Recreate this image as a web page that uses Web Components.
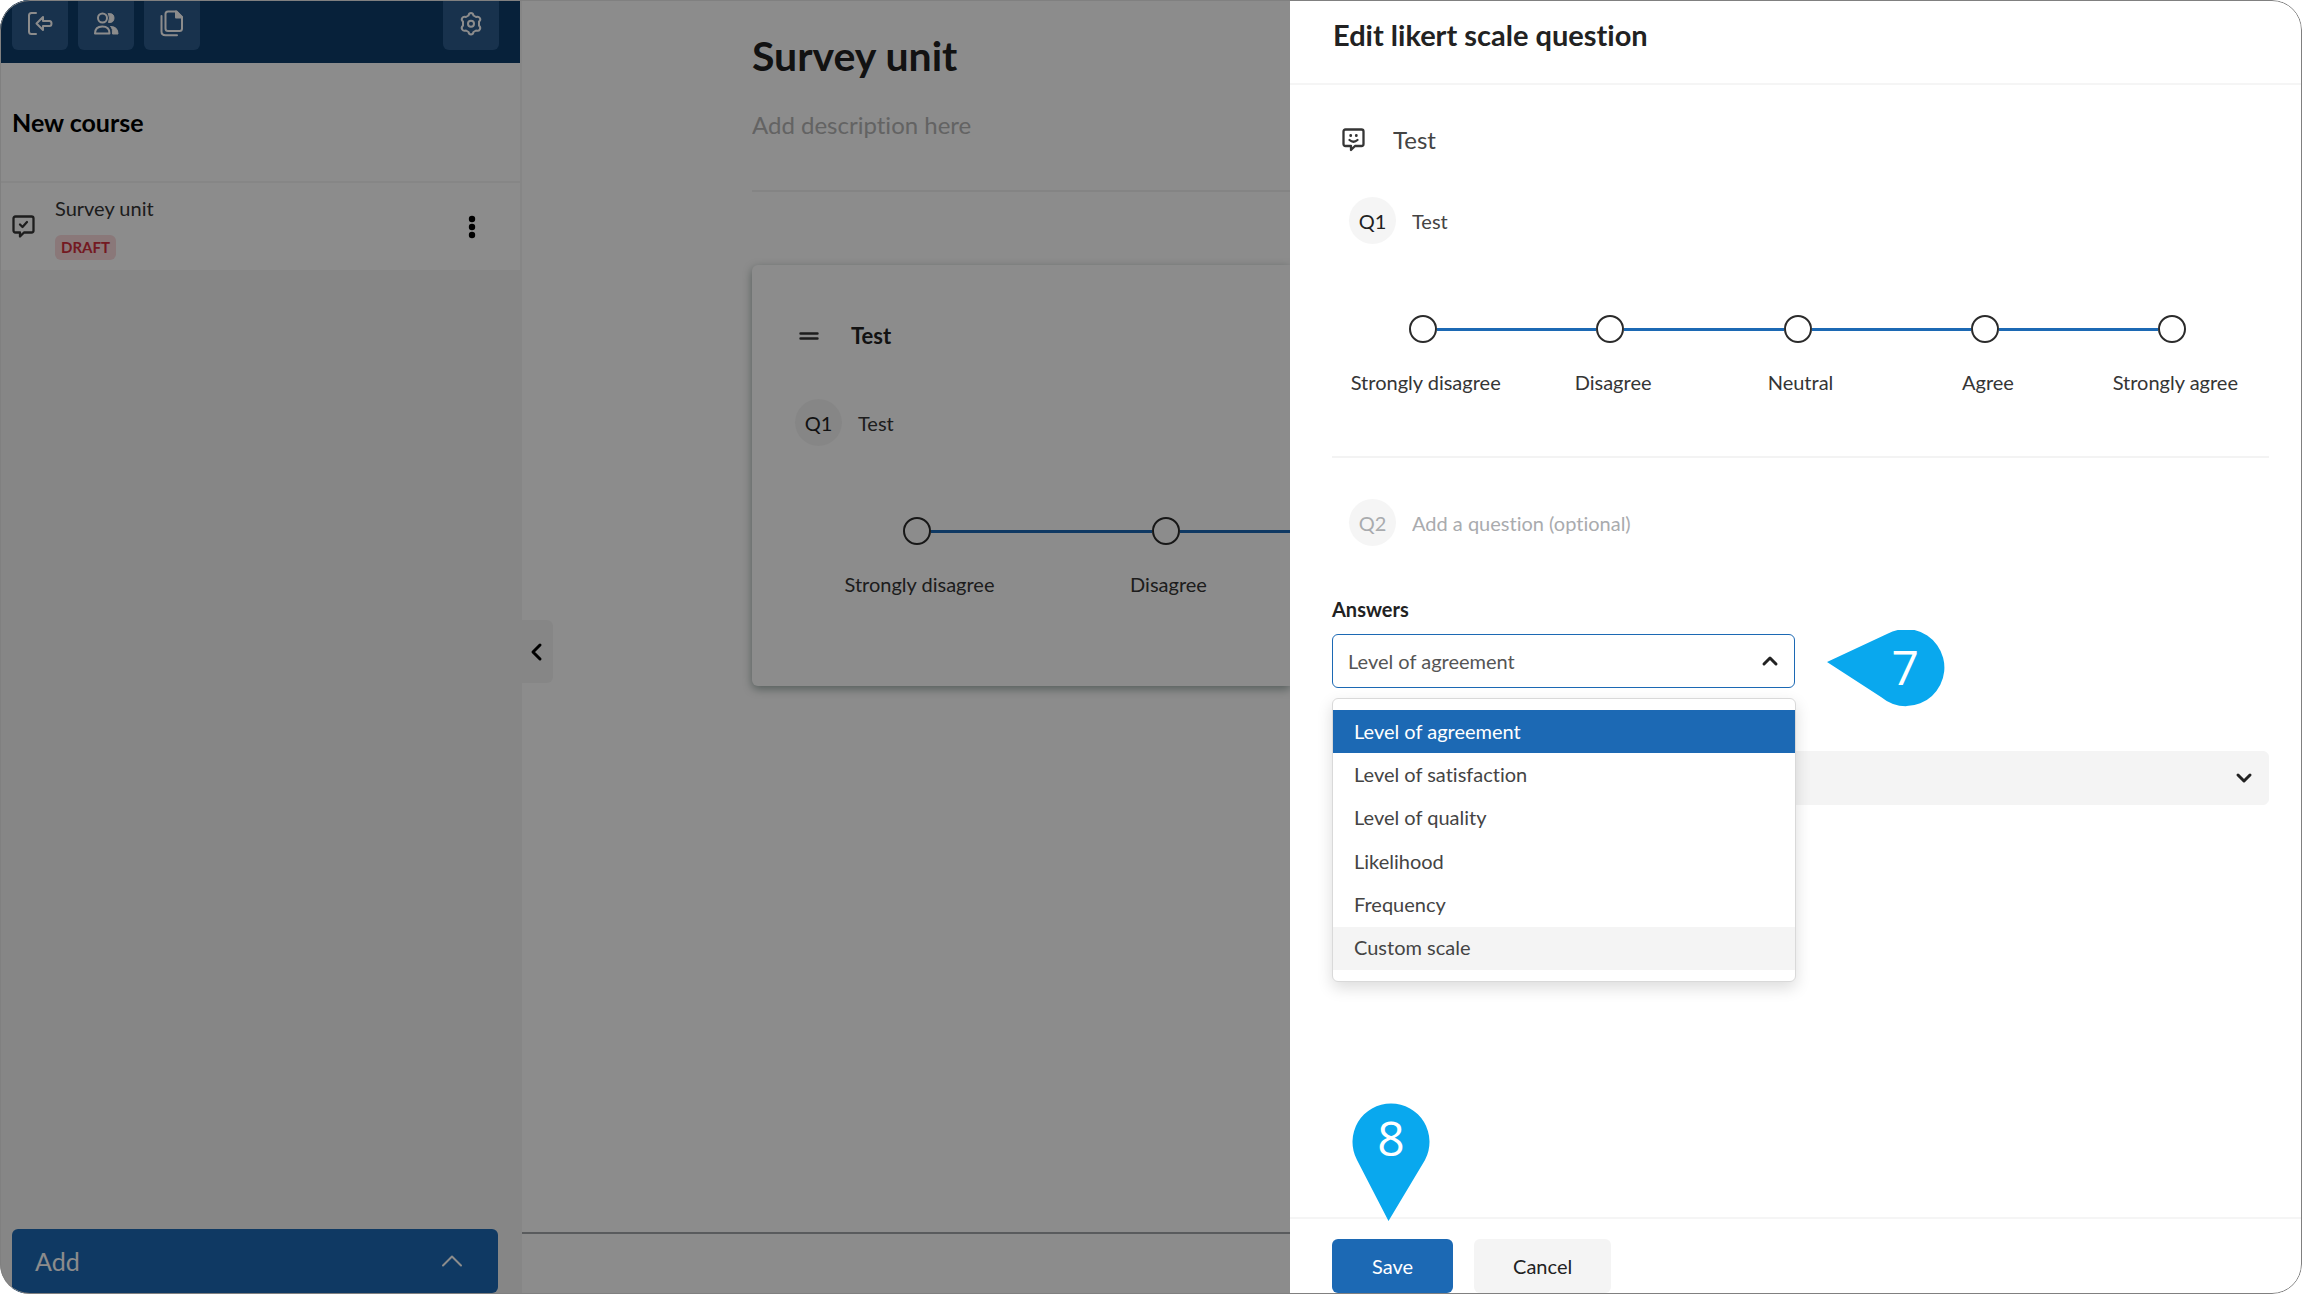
<!DOCTYPE html>
<html lang="en">
<head>
<meta charset="utf-8">
<title>Survey unit</title>
<style>
html, body { height: 100%; margin: 0; background: #fff; }
body { font: 400 20px/28px Lato, "Open Sans", sans-serif; font-variant-ligatures: none; color: #353535; }
</style>
</head>
<body>
<survey-app></survey-app>

<template id="t-icon">
<style>
:host { display: block; flex: none; width: var(--w, 26px); height: var(--h, 26px); }
svg { display: block; width: 100%; height: 100%; fill: none; stroke: currentColor; stroke-width: 2; stroke-linecap: round; stroke-linejoin: round; }
</style>
</template>

<template id="t-tool">
<style>
:host { display: block; }
button { display: flex; align-items: center; justify-content: center; width: 56px; height: 56px; padding: 3px 0 0; border: 0; border-radius: 6px; background: #2c5b8c; color: #fff; }
</style>
<button type="button"><slot></slot></button>
</template>

<template id="t-badge">
<style>
:host { display: flex; flex: none; align-items: center; justify-content: center; width: 47px; height: 47px; border-radius: 50%; background: #f5f5f5; color: #222; }
</style>
<slot></slot>
</template>

<template id="t-likert">
<style>
:host { display: flex; }
.step { flex: 1; min-width: 0; display: flex; flex-direction: column; align-items: center; gap: 25px; }
.rail { display: flex; align-items: center; align-self: stretch; margin: 0 3px 0 -3px; }
.rail i { flex: 1; height: 3px; background: #1c69b4; }
.step:first-of-type .rail i:first-child, :host(:not([more])) .step:last-of-type .rail i:last-child { visibility: hidden; }
input { appearance: none; flex: none; box-sizing: border-box; width: 28px; height: 28px; margin: 0; border: 2px solid #2b2b2b; border-radius: 50%; background: #fff; }
label { white-space: nowrap; }
.tail { display: none; flex: 1; height: 3px; margin: 12px 0 0 -3px; background: #1c69b4; }
:host([more]) .step { flex: 0 0 249px; }
:host([more]) .tail { display: block; }
</style>
</template>

<template id="t-sidebar">
<style>
:host { display: flex; flex-direction: column; min-width: 0; background: #f5f5f5; }
.tools { display: flex; gap: 10px; height: 56px; padding: 0 21px 13px 12px; margin: -6px 2px 0 0; background: #0d3d6b; }
.tools tool-button:last-child { margin-left: auto; }
.course { display: flex; align-items: center; height: 118px; padding: 0 12px; margin-right: 2px; background: #fff; border-bottom: 2px solid #f5f5f5; }
h2 { margin: 0; font: 700 25px/32px Lato, sans-serif; color: #000; }
.unit { display: flex; align-items: center; gap: 20px; height: 87px; padding: 0 44px 0 12px; margin-right: 2px; background: #fff; }
.name { flex: 1; display: flex; flex-direction: column; align-items: flex-start; gap: 13px; }
.draft { padding: 0 6px; border-radius: 6px; background: #fbdadd; color: #d32f3c; font: 700 15px/25px Lato, sans-serif; }
.menu { padding: 0; border: 0; background: none; color: #000; }
.grow { flex: 1; }
.add { display: flex; align-items: center; justify-content: space-between; height: 64px; margin: 0 24px 1px 12px; padding: 0 35px 0 23px; border: 0; border-radius: 6px; background: #1c69b4; color: #fff; font: 400 25px/32px Lato, sans-serif; }
</style>
<nav class="tools">
  <tool-button><ui-icon name="exit"></ui-icon></tool-button>
  <tool-button><ui-icon name="users"></ui-icon></tool-button>
  <tool-button><ui-icon name="copy"></ui-icon></tool-button>
  <tool-button><ui-icon name="gear"></ui-icon></tool-button>
</nav>
<div class="course"><h2>New course</h2></div>
<div class="unit">
  <ui-icon name="check" style="--w:23px;--h:23px"></ui-icon>
  <div class="name"><span>Survey unit</span><span class="draft">DRAFT</span></div>
  <button class="menu" type="button" aria-label="Unit menu"><ui-icon name="dots" style="--w:8px;--h:24px"></ui-icon></button>
</div>
<div class="grow"></div>
<button class="add" type="button"><span>Add</span><ui-icon name="thin-up" style="--w:22px;--h:14px"></ui-icon></button>
</template>

<template id="t-main">
<style>
:host { position: relative; display: flex; flex-direction: column; min-width: 0; overflow: hidden; background: #fff; }
.body { flex: 1; display: flex; flex-direction: column; padding: 31px 0 0 230px; }
h1 { margin: 0; font: 700 41px/50px Lato, sans-serif; color: #222; }
.desc { height: 32px; margin: 28px 0 0; padding: 0; border: 0; outline: 0; background: none; font: 400 24px/32px Lato, sans-serif; font-variant-ligatures: none; color: #222; }
.desc::placeholder { color: #b4b4b4; opacity: 1; }
hr { width: 100%; height: 2px; margin: 49px 0 73px; border: 0; background: #f1f1f1; }
.card { display: flex; flex-direction: column; box-sizing: border-box; height: 421px; padding: 53px 0 0 43px; border-radius: 6px 0 0 6px; background: #fff; box-shadow: 0 3px 10px rgba(0,40,30,.4); }
.head { display: flex; align-items: center; gap: 32px; padding-left: 4px; }
h3 { margin: 0; font: 700 22px/36px Lato, sans-serif; color: #222; }
.q { display: flex; align-items: center; gap: 16px; margin: 45px 0 71px; }
.foot { height: 60px; border-top: 2px solid #a3a6aa; }
.fold { position: absolute; left: 0; top: 620px; display: flex; align-items: center; width: 31px; height: 63px; padding: 0 0 0 8px; border: 0; border-radius: 0 6px 6px 0; background: #f5f5f5; color: #000; }
</style>
<div class="body">
  <h1>Survey unit</h1>
  <input class="desc" aria-label="Description" placeholder="Add description here">
  <hr>
  <section class="card">
    <div class="head"><ui-icon name="grip" style="--w:20px;--h:12px"></ui-icon><h3>Test</h3></div>
    <div class="q"><q-badge>Q1</q-badge><span>Test</span></div>
    <likert-scale more points="Strongly disagree|Disagree"></likert-scale>
  </section>
</div>
<div class="foot"></div>
<button class="fold" type="button" aria-label="Collapse sidebar"><ui-icon name="left" style="--w:12px;--h:18px"></ui-icon></button>
</template>

<template id="t-dropdown">
<style>
:host { display: flex; flex-direction: column; gap: 11px; }
label { color: #222; font-weight: 700; }
.box { position: relative; display: grid; align-items: center; }
select, ui-icon { grid-area: 1 / 1; }
select { appearance: none; box-sizing: border-box; width: 100%; height: 54px; padding: 0 15px; border: 1px solid #f4f4f4; border-radius: 6px; outline: 0; background: #f4f4f4; color: #555; font: inherit; opacity: 1; }
:host([open]) select { border-color: #1c69b4; background: #fff; }
ui-icon { justify-self: end; margin-right: 16px; color: #222; pointer-events: none; }
ul { position: absolute; z-index: 2; top: 64px; left: 0; right: -1px; box-sizing: border-box; display: grid; grid-auto-rows: 1fr; height: 284px; margin: 0; padding: 11px 0; border: 1px solid #d9d9d9; border-radius: 6px; background: #fff; box-shadow: 0 6px 16px rgba(0,0,0,.14); list-style: none; }
li { display: flex; align-items: center; padding: 0 21px 2px; color: #444; }
li.on { background: #1c69b4; color: #fff; }
li.hover { background: #f4f4f4; }
</style>
</template>

<template id="t-pin">
<style>
:host { position: absolute; z-index: 3; display: grid; place-items: center; color: #fff; font: 400 48px/64px "Open Sans", sans-serif; }
:host([to="left"]) { width: 118px; height: 78px; }
:host([to="down"]) { width: 78px; height: 119px; }
svg, span { grid-area: 1 / 1; }
svg { width: 100%; height: 100%; fill: #09a8ee; }
:host([to="left"]) span { justify-self: end; padding: 0 26px 4px 0; }
:host([to="down"]) span { align-self: start; padding-top: 4px; }
</style>
<svg></svg><span><slot></slot></span>
</template>

<template id="t-panel">
<style>
:host { display: flex; flex-direction: column; min-width: 0; background: #fff; }
header { display: flex; align-items: center; height: 85px; padding: 0 43px 14px; box-sizing: border-box; border-bottom: 2px solid #f5f5f5; }
h2 { margin: 0; font: 700 29px/36px Lato, sans-serif; font-variant-ligatures: none; color: #222; }
.body { position: relative; flex: 1; display: flex; flex-direction: column; padding: 37px 33px 0 42px; }
input { flex: 1; min-width: 0; padding: 0; border: 0; outline: 0; background: none; color: #444; font: inherit; }
input::placeholder { color: #a9abae; opacity: 1; }
.title { display: flex; align-items: center; gap: 28px; padding-left: 10px; }
.title input { height: 36px; font-size: 24px; line-height: 36px; }
.q { display: flex; align-items: center; gap: 16px; padding-left: 17px; }
.q1 { margin: 39px 0 71px; }
hr { width: 100%; height: 2px; margin: 60px 0 41px; border: 0; background: #f3f3f3; }
.q2 q-badge { color: #a9abae; }
.answers { margin-top: 49px; width: 463px; }
.second { margin-top: 63px; }
footer { display: flex; gap: 21px; padding: 20px 42px 1px; border-top: 2px solid #f5f5f5; }
footer button { height: 54px; padding: 0 39px; border: 0; border-radius: 6px; background: #f4f4f4; color: #222; font: inherit; }
footer .save { padding: 0 40px; background: #1c69b4; color: #fff; }
.seven { left: 537px; top: 545px; }
.eight { left: 62px; bottom: -4px; }
</style>
<header><h2>Edit likert scale question</h2></header>
<div class="body">
  <div class="title"><ui-icon name="smile" style="--w:23px;--h:24px"></ui-icon><input aria-label="Title" value="Test"></div>
  <div class="q q1"><q-badge>Q1</q-badge><input aria-label="Question 1" value="Test"></div>
  <likert-scale points="Strongly disagree|Disagree|Neutral|Agree|Strongly agree"></likert-scale>
  <hr>
  <div class="q q2"><q-badge>Q2</q-badge><input aria-label="Question 2" placeholder="Add a question (optional)"></div>
  <drop-down class="answers" open heading="Answers" options="Level of agreement|Level of satisfaction|Level of quality|Likelihood|Frequency|Custom scale"></drop-down>
  <drop-down class="second" options=""></drop-down>
  <map-pin class="seven" to="left">7</map-pin>
  <map-pin class="eight" to="down">8</map-pin>
</div>
<footer><button class="save" type="button">Save</button><button type="button">Cancel</button></footer>
</template>

<template id="t-app">
<style>
:host { position: relative; display: grid; grid-template-columns: 522fr 768fr 1012fr; height: 100vh; border-radius: 30px; overflow: hidden; background: #fff; }
.scrim { position: absolute; inset: 0; grid-column: 1 / 3; z-index: 4; background: rgba(0,0,0,.45); }
.frame { position: absolute; inset: 0; z-index: 5; border: 1px solid #808080; border-radius: 30px; pointer-events: none; }
</style>
<side-bar></side-bar><unit-editor></unit-editor><edit-panel></edit-panel><div class="scrim"></div><div class="frame"></div>
</template>

<script>
const ICONS = {
  exit: ['0 0 26 26', '<path d="M9 2H4.500Q2 2 2 4.500V20.500Q2 23 4.500 23H9"/><path d="M9.500 12.500L16 6V10H22.500Q24.500 10 24.500 12.500T22.500 15H16V19Z"/>'],
  users: ['0 0 26 26', '<circle cx="9.500" cy="7" r="4.500"/><path d="M2 22.500Q2 15.500 9.300 15.500T16.500 22.500Z"/><path d="M15.500 2.700Q21 2 21 7T15.500 11.500Q17.500 7 15.500 2.700ZM18 15.500Q25 15.500 25 23H19.500Q20 18 18 15.500Z" fill="currentColor" stroke-width="1"/>'],
  copy: ['0 0 26 26', '<path d="M9 0.500H17.500L23 6V17.500Q23 20 20.500 20H9Q6.500 20 6.500 17.500V3Q6.500 0.500 9 0.500Z"/><path d="M17 0.500V6.500H23Z" fill="currentColor"/><path d="M2.500 5V20.500Q2.500 24.300 6.500 24.300H18"/>'],
  gear: ['0 0 26 26', '<path d="M10.500 4.500Q11 2 13 2T15.500 4.500L18 6Q20.500 5 21.800 7T21 10.500V14.500Q23 16.500 21.800 18.500T18 19.500L15.500 21Q15 23.500 13 23.500T10.500 21L8 19.500Q5.500 20.500 4.200 18.500T5 14.500V10.500Q3 9 4.200 7T8 6Z"/><circle cx="13" cy="12.700" r="3"/>'],
  check: ['0 0 23 23', '<g stroke-width="2.300"><path d="M3.500 1.500H19.500Q21.500 1.500 21.500 3.500V15.500Q21.500 17.500 19.500 17.500H12L8 21.500V17.500H3.500Q1.500 17.500 1.500 15.500V3.500Q1.500 1.500 3.500 1.500Z"/><path d="M8 9.500L10.500 12L15 7"/></g>'],
  smile: ['0 0 23 24', '<g stroke-width="2.300"><path d="M3.500 1.500H19.500Q21.500 1.500 21.500 3.500V16Q21.500 18 19.500 18H13L9 22V18H3.500Q1.500 18 1.500 16V3.500Q1.500 1.500 3.500 1.500Z"/><path d="M7.500 12Q11.500 15.500 15.500 12"/></g><path d="M8.700 7.500V7.700M14.300 7.500V7.700" stroke-width="2.800"/>'],
  dots: ['0 0 8 24', '<g fill="currentColor" stroke="none"><circle cx="4" cy="4" r="3.200"/><circle cx="4" cy="12" r="3.200"/><circle cx="4" cy="20" r="3.200"/></g>'],
  grip: ['0 0 20 12', '<path d="M1.500 3.500H18.500M1.500 8.500H18.500" stroke-width="2.400"/>'],
  left: ['0 0 12 18', '<path d="M10 2L3 9L10 16" stroke-width="3"/>'],
  up: ['0 0 18 12', '<path d="M3 9L9 3L15 9" stroke-width="3"/>'],
  down: ['0 0 18 12', '<path d="M3 3L9 9L15 3" stroke-width="3"/>'],
  'thin-up': ['0 0 22 14', '<path d="M2 11.500L11 2.500L20 11.500"/>']
};
const PINS = {
  left: ['0 0 118 78', 'M0 32L60.500 3.800A38.500 38.500 0 1 1 54 67Z'],
  down: ['0 0 78 119', 'M36.500 119L5 58A38.500 38.500 0 1 1 73 58Z']
};
class Base extends HTMLElement {
  constructor() {
    super();
    this.attachShadow({ mode: 'open' });
    this.shadowRoot.append(document.getElementById(this.constructor.tpl).content.cloneNode(true));
  }
}
const define = (name, tpl, connect) => customElements.define(name, class extends Base {
  static tpl = tpl;
  connectedCallback() { if (connect) connect(this, this.shadowRoot); }
});
define('ui-icon', 't-icon', (el, root) => {
  const [box, shape] = ICONS[el.getAttribute('name')];
  root.innerHTML += `<svg viewBox="${box}" overflow="visible" aria-hidden="true">${shape}</svg>`;
});
define('tool-button', 't-tool');
define('q-badge', 't-badge');
define('likert-scale', 't-likert', (el, root) => {
  const steps = el.getAttribute('points').split('|').map((p, i) =>
    `<div class="step"><div class="rail"><i></i><input type="radio" name="point" id="p${i}"><i></i></div><label for="p${i}">${p}</label></div>`);
  root.innerHTML += steps.join('') + (el.hasAttribute('more') ? '<div class="tail"></div>' : '');
});
define('drop-down', 't-dropdown', (el, root) => {
  const open = el.hasAttribute('open');
  const heading = el.getAttribute('heading');
  const items = el.getAttribute('options').split('|');
  root.innerHTML += (heading ? `<label for="s">${heading}</label>` : '') +
    `<div class="box"><select id="s"${heading ? '' : ' aria-label="Option"'}>${items.map(o => `<option>${o}</option>`).join('')}</select>` +
    `<ui-icon name="${open ? 'up' : 'down'}" style="--w:18px;--h:12px"></ui-icon>` +
    (open ? `<ul role="listbox">${items.map((o, i) => `<li role="option" class="${i === 0 ? 'on' : i === items.length - 1 ? 'hover' : ''}">${o}</li>`).join('')}</ul>` : '') + '</div>';
});
define('map-pin', 't-pin', (el, root) => {
  const [box, d] = PINS[el.getAttribute('to')];
  const svg = root.querySelector('svg');
  svg.setAttribute('viewBox', box);
  svg.innerHTML = `<path d="${d}"/>`;
});
define('side-bar', 't-sidebar');
define('unit-editor', 't-main');
define('edit-panel', 't-panel');
define('survey-app', 't-app');
</script>
</body>
</html>
